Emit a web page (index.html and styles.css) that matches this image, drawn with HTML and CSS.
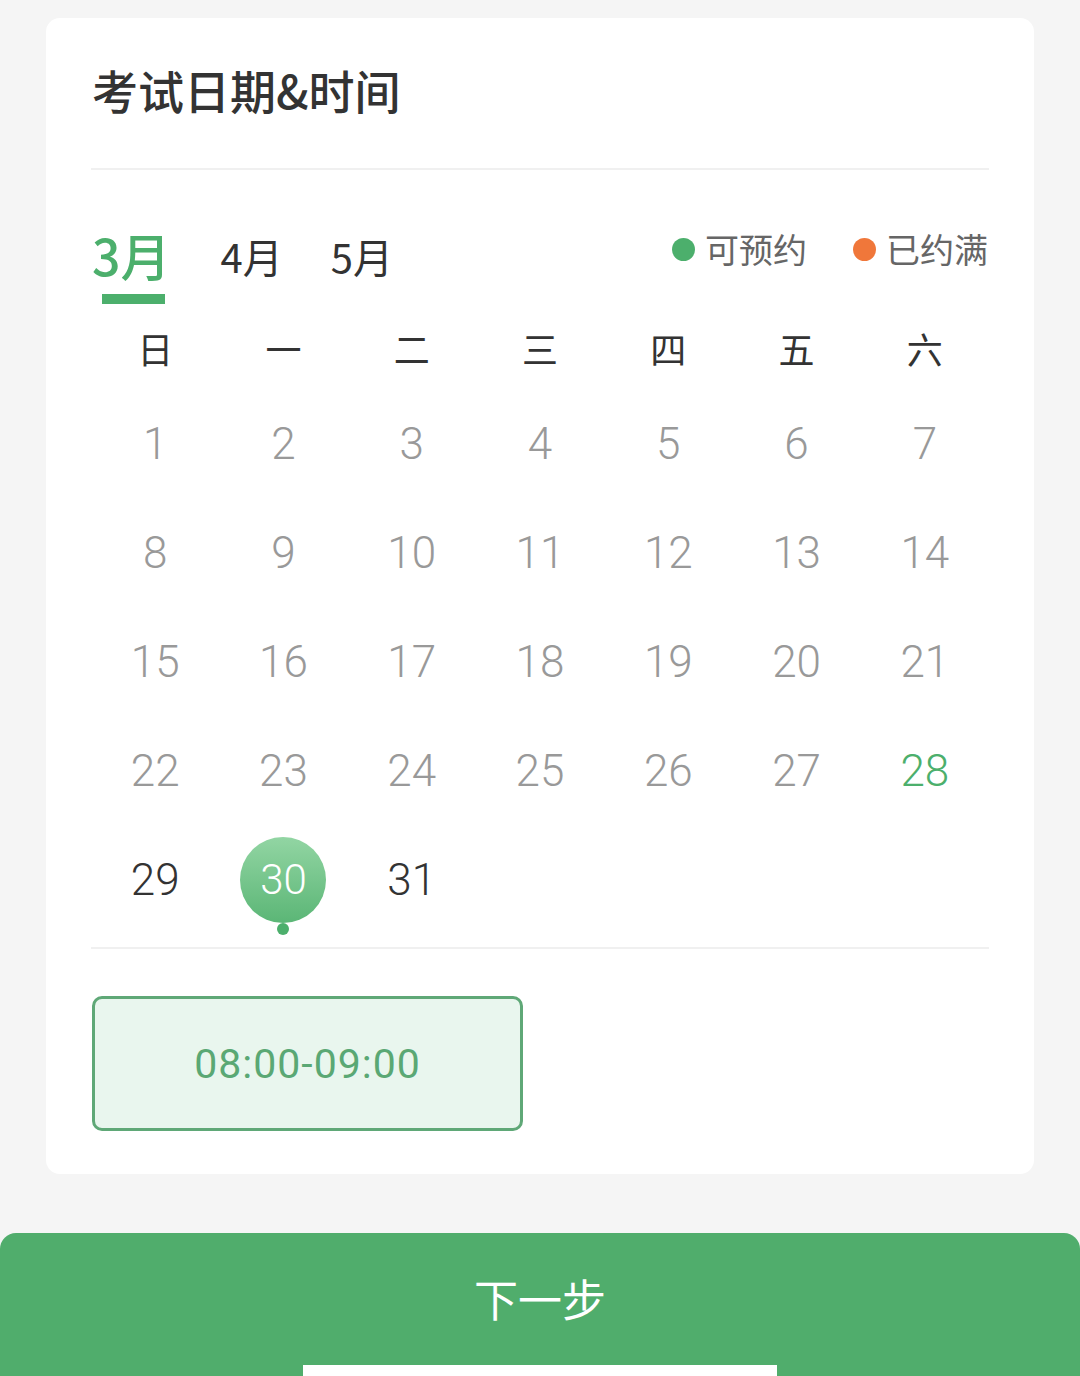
FILE: index.html
```html
<!DOCTYPE html>
<html lang="zh-CN">
<head>
    <meta charset="UTF-8">
    <meta name="viewport" content="width=device-width, initial-scale=1.0">
    <title>考试日期&时间</title>
    <link rel="stylesheet" href="styles.css">
</head>
<body>

    <div class="card">
        <h2 class="title">考试日期&amp;时间</h2>
        <div class="line"></div>

        <div class="month-bar">
            <div class="tabs">
                <span class="tab active">3月</span>
                <span class="tab">4月</span>
                <span class="tab">5月</span>
            </div>
            <div class="legend">
                <span class="legend-item"><i class="dot green"></i>可预约</span>
                <span class="legend-item"><i class="dot orange"></i>已约满</span>
            </div>
        </div>

        <div class="week">
            <span>日</span><span>一</span><span>二</span><span>三</span><span>四</span><span>五</span><span>六</span>
        </div>

        <div class="days" id="days"></div>

        <div class="line"></div>

        <div class="slots">
            <div class="slot">08:00-09:00</div>
        </div>
    </div>

    <div class="next-btn">
        <span>下一步</span>
        <div class="home-bar"></div>
    </div>

    <script>
    let days = document.getElementById('days');
    // 3月1日是周日
    for (let d = 1; d <= 31; d++) {
        let cell = document.createElement('div');
        cell.className = 'day';
        if (d === 28) cell.classList.add('open');
        if (d === 29 || d === 31) cell.classList.add('avail');
        if (d === 30) {
            cell.classList.add('selected');
            cell.innerHTML = '<span class="num">30</span><i class="mark"></i>';
        } else {
            cell.innerHTML = '<span class="num">' + d + '</span>';
        }
        days.appendChild(cell);
    }
    </script>

</body>
</html>
```

FILE: styles.css
```css
body {
    margin: 0;
    padding: 18px 0 0;
    background: #f5f5f5;
    font-family: "Noto Sans CJK SC", "Noto Sans", sans-serif;
    color: #333;
    height: 1358px;
    overflow: hidden;
    display: flex;
    flex-direction: column;
}

.card {
    margin: 0 46px;
    background: #fff;
    border-radius: 14px;
    padding: 0 46px 43px;
}

.title {
    margin: 0;
    padding: 42px 0 0;
    line-height: 58px;
    font-size: 46px;
    font-weight: 500;
    color: #333;
    box-sizing: border-box;
    height: 150px;
}

.line { height: 2px; background: #f0f0f0; margin: 0 -1px; }

.month-bar {
    display: flex;
    justify-content: space-between;
    align-items: flex-start;
    height: 150px;
}
.tabs { display: flex; align-items: flex-end; margin-top: 56px; }
.tab {
    font-size: 40px;
    line-height: 52px;
    margin-right: 48px;
    color: #333;
    position: relative;
}
.tab.active {
    font-size: 50px;
    line-height: 56px;
    color: #4caf6c;
    font-weight: 500;
    margin-right: 50px;
}
.tab.active::after {
    content: "";
    position: absolute;
    left: 10px;
    right: 6px;
    bottom: -22px;
    height: 10px;
    background: #4caf6c;
}

.legend { display: flex; margin-top: 56px; gap: 46px; }
.legend-item {
    display: flex;
    align-items: center;
    font-size: 34px;
    line-height: 46px;
    color: #666;
}
.dot { width: 23px; height: 23px; border-radius: 50%; margin-right: 10px; }
.dot.green { background: #4caf6c; }
.dot.orange { background: #f0773a; }

.week, .days {
    display: grid;
    grid-template-columns: repeat(7, 1fr);
    margin: 0 -1px;
    text-align: center;
}
.week {
    font-size: 36px;
    line-height: 60px;
    color: #333;
    margin-top: -2px;
    margin-bottom: 8px;
}
.days { grid-auto-rows: 109px; padding-bottom: 16px; }
.day {
    display: flex;
    align-items: center;
    justify-content: center;
    position: relative;
    font-family: "Roboto", "Liberation Sans", sans-serif;
    font-size: 44px;
    font-weight: 300;
    color: #999;
}
.day .num { padding-top: 6px; }
.day.open { color: #4caf6c; }
.day.avail { color: #333; }
.day.selected .num {
    width: 86px;
    height: 86px;
    margin-top: 6px;
    padding-top: 0;
    border-radius: 50%;
    background: linear-gradient(#92d5a3, #5bb676);
    color: #fff;
    display: flex;
    align-items: center;
    justify-content: center;
    font-size: 42px;
}
.mark {
    position: absolute;
    left: 50%;
    top: 101px;
    width: 12px;
    height: 12px;
    margin-left: -6px;
    border-radius: 50%;
    background: #4caf6c;
}

.slots { padding-top: 47px; }
.slot {
    width: 431px;
    height: 135px;
    box-sizing: border-box;
    border: 3px solid #5fa877;
    border-radius: 10px;
    background: #e9f6ee;
    color: #5aa874;
    font-family: "Roboto", "Liberation Sans", sans-serif;
    font-size: 41px;
    display: flex;
    align-items: center;
    justify-content: center;
    letter-spacing: 1px;
}

.next-btn {
    margin-top: 59px;
    flex: 1;
    background: #50ad6c;
    border-radius: 16px 16px 0 0;
    color: #fff;
    font-size: 44px;
    text-align: center;
    padding-top: 33px;
    box-sizing: border-box;
    position: relative;
}
.home-bar {
    position: absolute;
    left: 303px;
    bottom: 0;
    width: 474px;
    height: 11px;
    background: #fff;
}
```
